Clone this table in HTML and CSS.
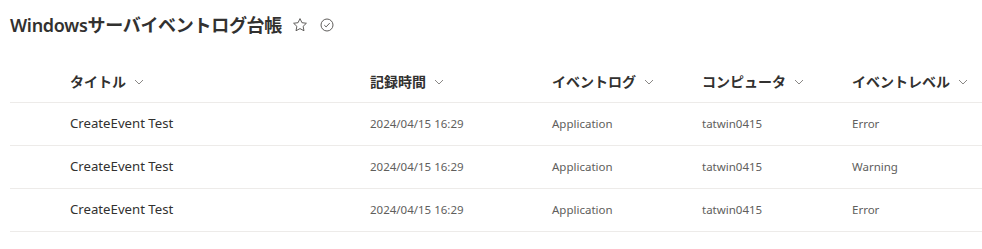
FILE: index.html
```html
<!DOCTYPE html>
<html lang="ja">
<head>
<meta charset="utf-8">
<title>Windowsサーバイベントログ台帳</title>
<link rel="stylesheet" href="styles.css">
</head>
<body>
<div class="page">
  <div class="titlebar">
    <h1 class="title">Windowsサーバイベントログ台帳</h1>
    <svg class="icon star" width="16" height="16" viewBox="0 0 16 16"><path d="M8 1.6l1.95 4.1 4.45.55-3.27 3.07.84 4.43L8 11.6l-3.97 2.15.84-4.43L1.6 6.25l4.45-.55z" fill="none" stroke="#605e5c" stroke-width="1" stroke-linejoin="round"/></svg>
    <svg class="icon check" width="16" height="16" viewBox="0 0 16 16"><circle cx="8" cy="8" r="6" fill="none" stroke="#605e5c" stroke-width="1"/><path d="M5.3 8.2l1.8 1.7 3.6-3.8" fill="none" stroke="#605e5c" stroke-width="1"/></svg>
  </div>
  <div class="grid">
    <div class="row head">
      <div class="cell"><span>タイトル</span><svg class="chev" width="10" height="6" viewBox="0 0 10 6"><path d="M1 1l4 4 4-4" fill="none" stroke="#8a8886" stroke-width="1"/></svg></div>
      <div class="cell"><span>記録時間</span><svg class="chev" width="10" height="6" viewBox="0 0 10 6"><path d="M1 1l4 4 4-4" fill="none" stroke="#8a8886" stroke-width="1"/></svg></div>
      <div class="cell"><span>イベントログ</span><svg class="chev" width="10" height="6" viewBox="0 0 10 6"><path d="M1 1l4 4 4-4" fill="none" stroke="#8a8886" stroke-width="1"/></svg></div>
      <div class="cell"><span>コンピュータ</span><svg class="chev" width="10" height="6" viewBox="0 0 10 6"><path d="M1 1l4 4 4-4" fill="none" stroke="#8a8886" stroke-width="1"/></svg></div>
      <div class="cell"><span>イベントレベル</span><svg class="chev" width="10" height="6" viewBox="0 0 10 6"><path d="M1 1l4 4 4-4" fill="none" stroke="#8a8886" stroke-width="1"/></svg></div>
    </div>
    <div class="row">
      <div class="cell main">CreateEvent Test</div>
      <div class="cell sub">2024/04/15 16:29</div>
      <div class="cell sub">Application</div>
      <div class="cell sub">tatwin0415</div>
      <div class="cell sub">Error</div>
    </div>
    <div class="row">
      <div class="cell main">CreateEvent Test</div>
      <div class="cell sub">2024/04/15 16:29</div>
      <div class="cell sub">Application</div>
      <div class="cell sub">tatwin0415</div>
      <div class="cell sub">Warning</div>
    </div>
    <div class="row">
      <div class="cell main">CreateEvent Test</div>
      <div class="cell sub">2024/04/15 16:29</div>
      <div class="cell sub">Application</div>
      <div class="cell sub">tatwin0415</div>
      <div class="cell sub">Error</div>
    </div>
  </div>
</div>
</body>
</html>
```
FILE: styles.css
```css
html, body {
  margin: 0;
  padding: 0;
  background: #ffffff;
}
body {
  font-family: "Noto Sans", "Noto Sans CJK JP", sans-serif;
  color: #323130;
}
.page {
  padding-left: 10px;
}
.titlebar {
  height: 60px;
  display: flex;
  align-items: center;
  gap: 10px;
  padding-bottom: 10px;
  box-sizing: border-box;
}
.title {
  margin: 0;
  font-size: 18px;
  font-weight: 600;
  letter-spacing: -0.3px;
  line-height: 28px;
  color: #323130;
}
.icon {
  display: block;
}
.check {
  margin-left: 1px;
}
.row {
  display: grid;
  grid-template-columns: 300px 182px 150px 150px 1fr;
  padding-left: 60px;
  height: 42px;
  border-bottom: 1px solid #edebe9;
  align-items: center;
}
.head .cell {
  display: flex;
  align-items: center;
  gap: 8px;
  font-size: 14px;
  font-weight: 600;
  color: #323130;
}
.chev {
  display: block;
  margin-top: 1px;
}
.main {
  font-size: 13.2px;
  color: #323130;
  padding-bottom: 2px;
}
.sub {
  font-size: 11.5px;
  color: #605e5c;
  padding-bottom: 2px;
}
```
